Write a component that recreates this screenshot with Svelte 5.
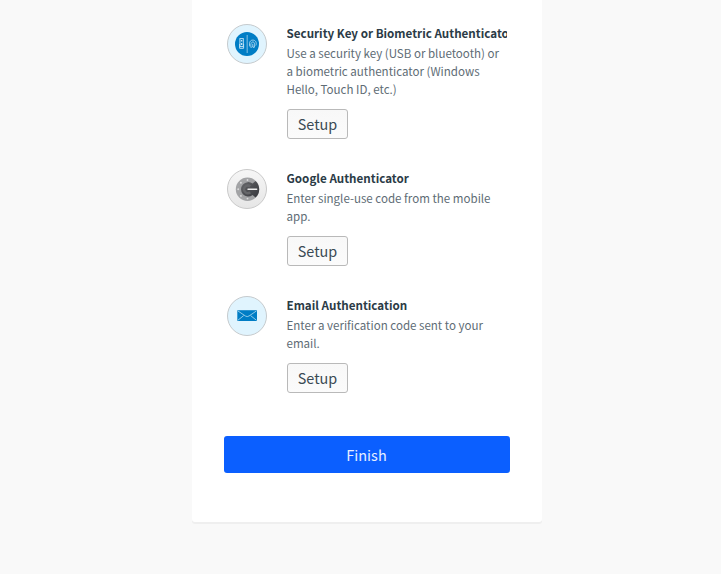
<script>
  const factors = [
    { icon: 'key', title: 'Security Key or Biometric Authenticator', text: 'Use a security key (USB or bluetooth) or a biometric authenticator (Windows Hello, Touch ID, etc.)' },
    { icon: 'google', title: 'Google Authenticator', text: 'Enter single-use code from the mobile app.' },
    { icon: 'email', title: 'Email Authentication', text: 'Enter a verification code sent to your email.' }
  ];
  const dots = [90, 135, 180, 225, 270].map((a) => ({
    x: 20.5 + 9.3 * Math.cos((a * Math.PI) / 180),
    y: 20.3 + 9.3 * Math.sin((a * Math.PI) / 180)
  }));
</script>

<main class="page">
  <section class="card">
    <ul class="factors">
      {#each factors as factor}
        <li class="factor">
          <svg class="icon" viewBox="0 0 40 40" width="40" height="40" aria-hidden="true">
            {#if factor.icon === 'key'}
              <circle cx="20" cy="20" r="19.5" fill="#e0f4fe" stroke="#c5cacd" />
              <circle cx="20" cy="20" r="12" fill="#007dc5" />
              <path d="M20.2 11v18" stroke="#70b7df" stroke-width="1.2" />
              <g fill="none" stroke="#c0e1f4" stroke-width=".95">
                <rect x="12.9" y="14.6" width="3.4" height="8" />
                <path d="M12.6 20v4.3h4V20" />
                <path d="M14.6 16v1.5M14.6 19v2" stroke-width="1.4" />
                <path d="M22.8 22.5c-1-4.2.5-6.4 3-6.4 2.8 0 4.2 2.4 3 5.4M24.2 24c-1-4 .1-6 1.7-6 1.9 0 2.3 2.6.4 5.8M25.8 19.8c.1 1.6-.2 2.5-.7 3.5M27.7 21.5l-.8 2.4" stroke-width=".8" />
              </g>
            {:else if factor.icon === 'google'}
              <defs>
                <linearGradient id="dial" x2="0" y2="1"><stop stop-color="#f6f6f6" /><stop offset="1" stop-color="#e6e6e6" /></linearGradient>
                <linearGradient id="face" x2="1" y2="1"><stop stop-color="#6b6c6f" /><stop offset=".5" stop-color="#4c4d51" /><stop offset="1" stop-color="#38393e" /></linearGradient>
              </defs>
              <circle cx="20" cy="20" r="19.5" fill="url(#dial)" stroke="#c9c9c9" />
              <circle cx="20.5" cy="20.3" r="11.7" fill="#a2a3a5" />
              <path d="M28.6 12A11.7 11.7 0 0 1 32.2 20.3a11.7 11.7 0 0 1-3.6 8.3l-3-2.6a7.2 7.2 0 1 1 0-11.4Z" fill="url(#face)" />
              <path d="M24 16.4a5 5 0 1 0 0 7.8l-1.7-2a2.5 2.5 0 1 1 0-3.8Z" fill="#66676a" />
              <path d="M21 20.3h8.7" stroke="#ececec" stroke-width="1.4" stroke-linecap="round" />
              {#each dots as dot}<circle cx={dot.x} cy={dot.y} r=".95" fill="#dadadb" />{/each}
            {:else}
              <circle cx="20" cy="20" r="19.5" fill="#e0f4fe" stroke="#c5cacd" />
              <path d="M10.3 14.2H30V25H10.3Z" fill="#007dc5" />
              <path d="M10.7 14.8 18.4 20q1.8 1.2 3.6 0l7.6-5.2M10.7 24.4l6-4.8M29.6 24.4l-6-4.8" fill="none" stroke="#a9d7ef" stroke-width=".85" />
            {/if}
          </svg>
          <div class="details">
            <h3>{factor.title}</h3>
            <p>{factor.text}</p>
            <button class="setup">Setup</button>
          </div>
        </li>
      {/each}
    </ul>
    <button class="finish">Finish</button>
  </section>
</main>

<style>
  :global(body) { background: #f9f9f9; }
  .page {
    box-sizing: border-box;
    height: 574px;
    padding-left: 192px;
    overflow: hidden;
    background: #f9f9f9;
    font-family: "Noto Sans CJK SC", "Noto Sans", sans-serif;
  }
  .card {
    box-sizing: border-box;
    width: 350px;
    height: 522px;
    padding: 24px 32px 0;
    background: #fff;
    border-radius: 0 0 3px 3px;
    box-shadow: 0 2px 0 rgba(175, 175, 175, 0.12);
  }
  .factors { list-style: none; margin: 0; padding: 0 3px; }
  .factor { display: flex; gap: 20px; margin-bottom: 30px; }
  .icon { flex: none; display: block; }
  .details { flex: none; width: 220px; }
  h3 {
    margin: 0;
    padding-bottom: 2px;
    overflow: hidden;
    white-space: nowrap;
    font-size: 11.63px;
    line-height: 18px;
    font-weight: 700;
    color: #2b3b46;
    text-indent: -0.5px;
  }
  p { margin: 0 0 11px -0.5px; font-size: 11.55px; line-height: 18px; color: #5e6c75; }
  button { display: block; box-sizing: border-box; margin: 0; font-family: inherit; font-weight: 400; }
  .setup {
    width: 61px;
    height: 30px;
    padding: 0;
    border: 1px solid #b9b9b9;
    border-radius: 3px;
    background: linear-gradient(#f8f8f8, #fbfbfb);
    font-size: 14.4px;
    line-height: 28px;
    color: #3a4a54;
  }
  .finish {
    width: 286px;
    height: 37px;
    margin-top: 43px;
    padding: 0 1px 0 0;
    border: 0;
    border-radius: 3px;
    background: #0b5fff;
    font-size: 14.5px;
    line-height: 38px;
    color: #e7efff;
  }
</style>
